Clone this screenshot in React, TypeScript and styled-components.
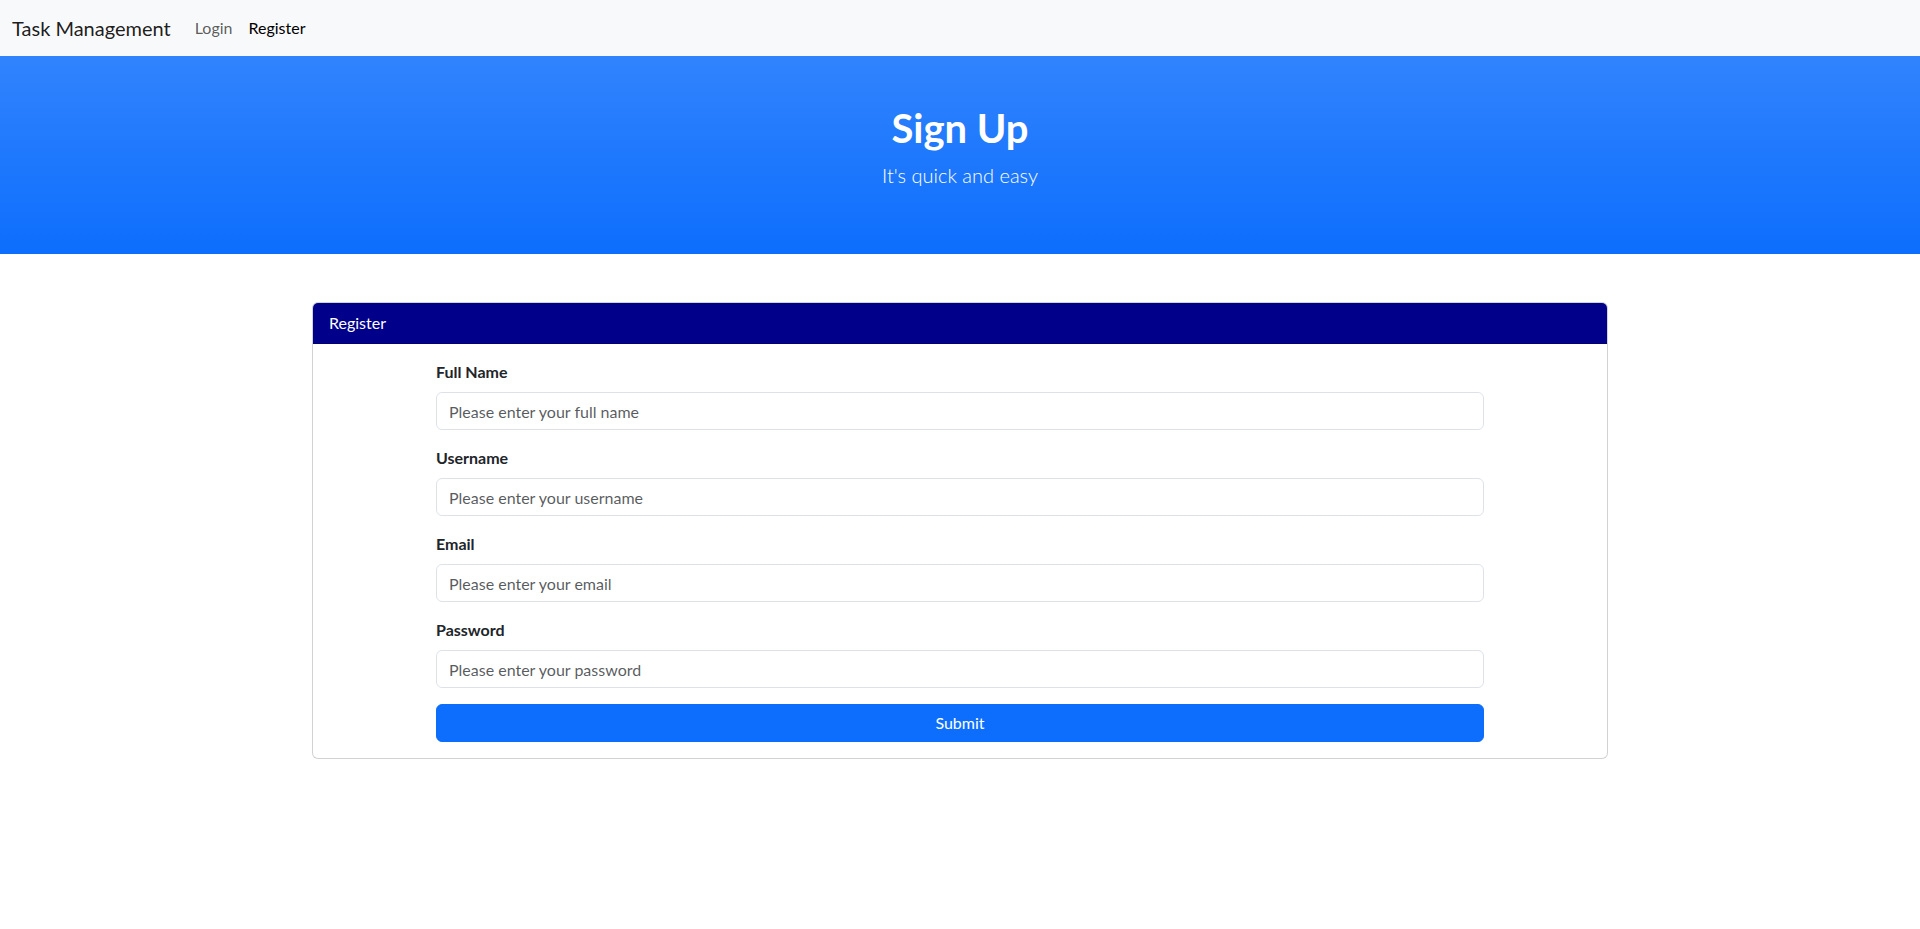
import React from "react";
import styled, { createGlobalStyle } from "styled-components";

const GlobalStyle = createGlobalStyle`
  *, *::before, *::after { box-sizing: border-box; }
  html, body { margin: 0; padding: 0; }
  body {
    font-family: "Lato", "Noto Sans", sans-serif;
    font-size: 16px;
    line-height: 1.5;
    color: #212529;
    background: #ffffff;
  }
`;

const Navbar = styled.nav`
  background: #f8f9fa;
  height: 56px;
  padding: 8px 12px;
  display: flex;
  align-items: center;
`;

const Brand = styled.a`
  font-size: 20px;
  line-height: 30px;
  color: rgba(0, 0, 0, 0.9);
  text-decoration: none;
  margin-right: 16px;
  padding: 5px 0;
`;

const NavLinks = styled.div`
  display: flex;
  align-items: center;
`;

const NavLink = styled.a<{ $active?: boolean }>`
  padding: 8px;
  font-size: 16px;
  color: ${(p) => (p.$active ? "rgba(0,0,0,1)" : "rgba(0,0,0,0.65)")};
  text-decoration: none;
`;

const Hero = styled.header`
  background-color: #0d6efd;
  background-image: linear-gradient(180deg, rgba(255, 255, 255, 0.15), rgba(255, 255, 255, 0));
  color: #fff;
  text-align: center;
  padding: 48px 0;
`;

const HeroTitle = styled.h1`
  margin: 0 0 8px;
  font-size: 40px;
  line-height: 1.2;
  font-weight: 700;
`;

const HeroLead = styled.p`
  margin: 0 0 16px;
  font-size: 20px;
  line-height: 30px;
  font-weight: 300;
`;

const Container = styled.main`
  max-width: 1320px;
  margin: 48px auto 0;
  padding: 0 12px;
`;

const Card = styled.section`
  border: 1px solid rgba(0, 0, 0, 0.175);
  border-radius: 6px;
  overflow: hidden;
  background: #fff;
`;

const CardHeader = styled.div`
  background: #00008b;
  color: #fff;
  padding: 8px 16px;
  line-height: 24px;
  border-bottom: 1px solid rgba(0, 0, 0, 0.175);
`;

const CardBody = styled.div`
  padding: 16px 123px;
`;

const Form = styled.form`
  display: flex;
  flex-direction: column;
`;

const Field = styled.div`
  margin-bottom: 16px;
`;

const Label = styled.label`
  display: block;
  font-weight: 700;
  margin-bottom: 8px;
  line-height: 24px;
`;

const Input = styled.input`
  display: block;
  width: 100%;
  height: 38px;
  padding: 6px 12px;
  font-family: inherit;
  font-size: 16px;
  line-height: 1.5;
  color: #212529;
  background: #fff;
  border: 1px solid #dee2e6;
  border-radius: 6px;
  outline: none;
  &::placeholder {
    color: rgba(33, 37, 41, 0.75);
  }
`;

const Submit = styled.button`
  height: 38px;
  width: 100%;
  border: 1px solid #0d6efd;
  background: #0d6efd;
  color: #fff;
  border-radius: 6px;
  font-family: inherit;
  font-size: 16px;
  line-height: 1.5;
  cursor: pointer;
`;

const fields = [
  { id: "fullname", label: "Full Name", type: "text", placeholder: "Please enter your full name" },
  { id: "username", label: "Username", type: "text", placeholder: "Please enter your username" },
  { id: "email", label: "Email", type: "email", placeholder: "Please enter your email" },
  { id: "password", label: "Password", type: "password", placeholder: "Please enter your password" },
];

export default function App() {
  return (
    <>
      <GlobalStyle />
      <Navbar>
        <Brand href="#">Task Management</Brand>
        <NavLinks>
          <NavLink href="#">Login</NavLink>
          <NavLink href="#" $active>
            Register
          </NavLink>
        </NavLinks>
      </Navbar>
      <Hero>
        <HeroTitle>Sign Up</HeroTitle>
        <HeroLead>It's quick and easy</HeroLead>
      </Hero>
      <Container>
        <Card>
          <CardHeader>Register</CardHeader>
          <CardBody>
            <Form onSubmit={(e) => e.preventDefault()}>
              {fields.map((f) => (
                <Field key={f.id}>
                  <Label htmlFor={f.id}>{f.label}</Label>
                  <Input id={f.id} type={f.type} placeholder={f.placeholder} />
                </Field>
              ))}
              <Submit type="submit">Submit</Submit>
            </Form>
          </CardBody>
        </Card>
      </Container>
    </>
  );
}
